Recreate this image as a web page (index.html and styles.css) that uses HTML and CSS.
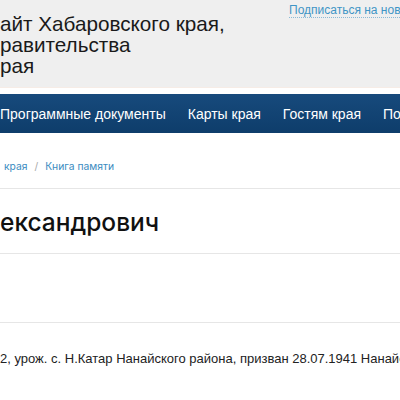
FILE: index.html
```html
<!DOCTYPE html>
<html lang="ru">
<head>
<meta charset="utf-8">
<link rel="stylesheet" href="styles.css">
</head>
<body>
<header class="top">
  <div class="title">айт Хабаровского края,<br>равительства<br>рая</div>
  <a class="subscribe" href="#">Подписаться на нов</a>
</header>
<nav class="menu">
  <a href="#">Программные документы</a>
  <a href="#">Карты края</a>
  <a href="#">Гостям края</a>
  <a href="#">Почетные</a>
</nav>
<div class="crumbs"><a href="#">края</a><span class="sep">/</span><a href="#">Книга памяти</a></div>
<h1 class="name">ександрович</h1>
<div class="blank"></div>
<p class="bio">2, урож. с. Н.Катар Нанайского района, призван 28.07.1941 Нанайским РВК</p>
</body>
</html>
```
FILE: styles.css
```css
html, body {
  margin: 0;
  padding: 0;
  width: 400px;
  height: 400px;
  overflow: hidden;
  background: #fff;
  font-family: "Liberation Sans", Arial, sans-serif;
}
.top {
  background: #efefef;
  height: 87px;
  border-bottom: 1px solid #f6ece6;
  display: flex;
  justify-content: space-between;
  white-space: nowrap;
}
.title {
  font-size: 20.7px;
  line-height: 21px;
  color: #1a1a1a;
  padding-top: 13px;
}
.subscribe {
  font-size: 12px;
  color: #3f95c6;
  text-decoration: none;
  border-bottom: 1px dotted #8bbad6;
  align-self: flex-start;
  margin-top: 3px;
  line-height: 14px;
  width: 111px;
  overflow: hidden;
}
.menu {
  margin-top: 6px;
  height: 39px;
  background: linear-gradient(#174a7c, #0e3d6b);
  display: flex;
  align-items: center;
  gap: 22px;
  white-space: nowrap;
  overflow: hidden;
}
.menu a {
  color: #fff;
  font-size: 14px;
  text-decoration: none;
}
.crumbs {
  padding: 27px 0 0 4px;
  height: 28px;
  font-family: Inter, "Liberation Sans", sans-serif;
  font-size: 10.3px;
  border-bottom: 1px solid #e6e6e6;
}
.crumbs a {
  color: #3b8cbf;
  text-decoration: none;
}
.sep {
  color: #aaa;
  margin: 0 7px;
}
.name {
  margin: 0;
  height: 65px;
  box-sizing: border-box;
  padding-top: 19px;
  font-family: Inter, "Liberation Sans", sans-serif;
  font-weight: 500;
  font-size: 24.5px;
  line-height: 28px;
  color: #111;
  border-bottom: 1px solid #e6e6e6;
}
.blank {
  height: 68px;
  border-bottom: 1px solid #e6e6e6;
}
.bio {
  margin: 28px 0 0;
  font-size: 13px;
  color: #222;
  white-space: nowrap;
}
```
